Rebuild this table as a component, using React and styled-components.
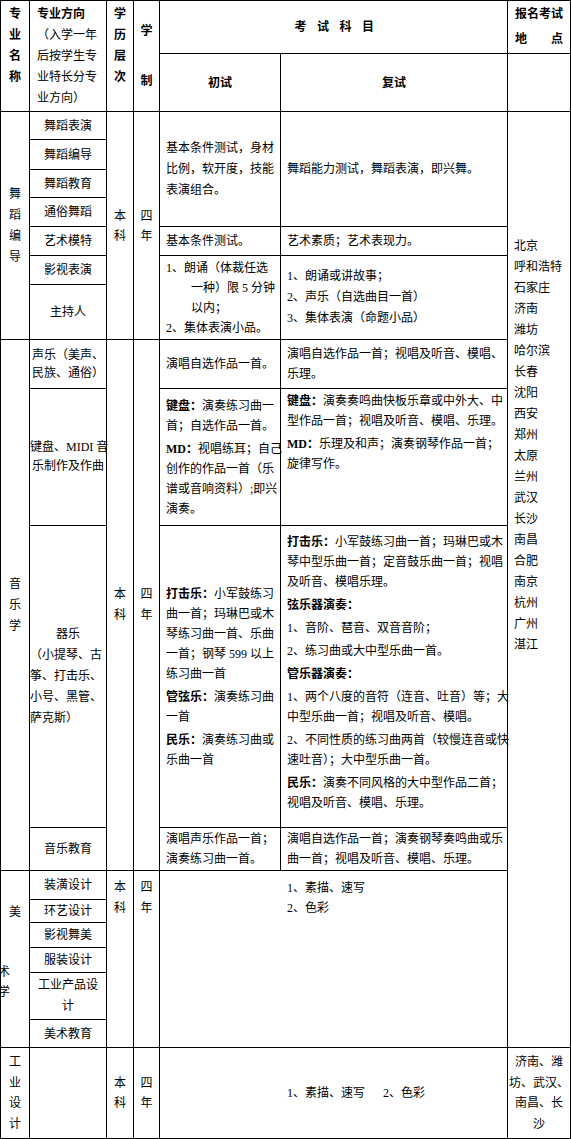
import React from 'react';
import styled, { createGlobalStyle } from 'styled-components';

const GlobalStyle = createGlobalStyle`
  html, body { margin: 0; padding: 0; background: #fff; }
  body {
    font-family: "Liberation Serif", "Noto Sans CJK SC", serif;
    font-size: 12px;
    color: #000;
  }
`;

const Sheet = styled.table`
  width: 570px;
  border-collapse: collapse;
  table-layout: fixed;
  font-size: 12px;
`;

const Col = styled.col`
  width: ${(p) => p.$w}px;
`;

const Row = styled.tr`
  height: ${(p) => p.$h}px;
`;

const Cell = styled.td`
  border: 1px solid #000;
  padding: ${(p) => p.$pt || 0}px 0 0 ${(p) => p.$pl || 0}px;
  text-align: ${(p) => p.$align || 'center'};
  vertical-align: ${(p) => p.$va || 'middle'};
  line-height: ${(p) => p.$lh || 20}px;
  font-weight: ${(p) => (p.$bold ? 700 : 400)};
  letter-spacing: ${(p) => p.$ls || 0}px;
  white-space: nowrap;
  overflow: visible;
`;

const Line = styled.div`
  white-space: pre;
  text-align: ${(p) => p.$align || 'inherit'};
  padding-left: ${(p) => p.$indent || 0}px;
  margin-left: ${(p) => p.$shift || 0}px;
`;

const Para = styled.div`
  & + & {
    margin-top: ${(p) => (p.$gap === undefined ? 4 : p.$gap)}px;
  }
`;

const Label = styled.b`
  font-weight: 700;
`;

const Gap = styled.span`
  display: inline-block;
  width: ${(p) => p.$w}px;
`;

const Chars = ({ text }) => text.split('').map((c, i) => <Line key={i}>{c}</Line>);
const Lines = ({ items, align }) =>
  items.map((t, i) => (
    <Line key={i} $align={align}>
      {t}
    </Line>
  ));

const cities = [
  '北京', '呼和浩特', '石家庄', '济南', '潍坊', '哈尔滨', '长春', '沈阳', '西安', '郑州',
  '太原', '兰州', '武汉', '长沙', '南昌', '合肥', '南京', '杭州', '广州', '湛江',
];

export default function App() {
  return (
    <>
      <GlobalStyle />
      <Sheet>
        <colgroup>
          <Col $w={29} />
          <Col $w={77} />
          <Col $w={27} />
          <Col $w={26} />
          <Col $w={121} />
          <Col $w={227} />
          <Col $w={63} />
        </colgroup>
        <tbody>
          <Row $h={53}>
            <Cell as="th" rowSpan={2} $bold $va="top" $pt={3} $lh={21}>
              <Chars text="专业名称" />
            </Cell>
            <Cell as="th" rowSpan={2} $align="left" $pl={7} $lh={21}>
              <Line><Label>专业方向</Label></Line>
              <Lines items={['（入学一年', '后按学生专', '业特长分专', '业方向）']} />
            </Cell>
            <Cell as="th" rowSpan={2} $bold $va="top" $pt={3} $lh={21}>
              <Chars text="学历层次" />
            </Cell>
            <Cell as="th" rowSpan={2} $bold $lh={25}>
              <Line>学</Line>
              <Line> </Line>
              <Line>制</Line>
            </Cell>
            <Cell as="th" colSpan={2} $bold $ls={10.5} $pl={12}>
              考试科目
            </Cell>
            <Cell as="th" $bold $lh={25}>
              <Line>报名考试</Line>
              <Line>地　　点</Line>
            </Cell>
          </Row>
          <Row $h={58}>
            <Cell as="th" $bold>初试</Cell>
            <Cell as="th" $bold>复试</Cell>
            <Cell />
          </Row>

          <Row $h={28}>
            <Cell rowSpan={7} $lh={21}>
              <Chars text="舞蹈编导" />
            </Cell>
            <Cell>舞蹈表演</Cell>
            <Cell rowSpan={7} $lh={20}>
              <Chars text="本科" />
            </Cell>
            <Cell rowSpan={7} $lh={20}>
              <Chars text="四年" />
            </Cell>
            <Cell rowSpan={4} $align="left" $pl={6} $lh={21}>
              <Lines items={['基本条件测试，身材', '比例，软开度，技能', '表演组合。']} />
            </Cell>
            <Cell rowSpan={4} $align="left" $pl={6}>
              舞蹈能力测试，舞蹈表演，即兴舞。
            </Cell>
            <Cell rowSpan={17} $align="left" $va="top" $pl={6} $pt={124} $lh={21}>
              <Lines items={cities} />
            </Cell>
          </Row>
          <Row $h={30}>
            <Cell>舞蹈编导</Cell>
          </Row>
          <Row $h={28}>
            <Cell>舞蹈教育</Cell>
          </Row>
          <Row $h={29}>
            <Cell>通俗舞蹈</Cell>
          </Row>
          <Row $h={29}>
            <Cell>艺术模特</Cell>
            <Cell $align="left" $pl={6}>基本条件测试。</Cell>
            <Cell $align="left" $pl={6}>艺术素质；艺术表现力。</Cell>
          </Row>
          <Row $h={29}>
            <Cell>影视表演</Cell>
            <Cell rowSpan={2} $align="left" $pl={6} $lh={20}>
              <Line>1、朗诵（体裁任选</Line>
              <Line $indent={25}>一种）限 5 分钟</Line>
              <Line $indent={25}>以内；</Line>
              <Line>2、集体表演小品。</Line>
            </Cell>
            <Cell rowSpan={2} $align="left" $pl={6} $lh={21}>
              <Lines items={['1、朗诵或讲故事；', '2、声乐（自选曲目一首）', '3、集体表演（命题小品）']} />
            </Cell>
          </Row>
          <Row $h={55}>
            <Cell>主持人</Cell>
          </Row>

          <Row $h={49}>
            <Cell rowSpan={4} $lh={21}>
              <Chars text="音乐学" />
            </Cell>
            <Cell $lh={18}>
              <Lines items={['声乐（美声、', '民族、通俗）']} />
            </Cell>
            <Cell rowSpan={4} $lh={21}>
              <Chars text="本科" />
            </Cell>
            <Cell rowSpan={4} $lh={21}>
              <Chars text="四年" />
            </Cell>
            <Cell $align="left" $pl={6}>演唱自选作品一首。</Cell>
            <Cell $align="left" $pl={6} $lh={20}>
              <Lines items={['演唱自选作品一首；视唱及听音、模唱、', '乐理。']} />
            </Cell>
          </Row>
          <Row $h={137}>
            <Cell $lh={19}>
              <Lines items={['键盘、MIDI 音', '乐制作及作曲']} />
            </Cell>
            <Cell $align="left" $pl={6} $lh={20}>
              <Para>
                <Line><Label>键盘：</Label>演奏练习曲一</Line>
                <Line>首；自选作品一首。</Line>
              </Para>
              <Para $gap={4}>
                <Line><Label>MD：</Label>视唱练耳；自己</Line>
                <Line>创作的作品一首（乐</Line>
                <Line>谱或音响资料）;即兴</Line>
                <Line>演奏。</Line>
              </Para>
            </Cell>
            <Cell $align="left" $va="top" $pl={6} $pt={2} $lh={20}>
              <Para>
                <Line><Label>键盘：</Label>演奏奏鸣曲快板乐章或中外大、中</Line>
                <Line>型作品一首；视唱及听音、模唱、乐理。</Line>
              </Para>
              <Para $gap={4}>
                <Line><Label>MD：</Label>乐理及和声；演奏钢琴作品一首；</Line>
                <Line>旋律写作。</Line>
              </Para>
            </Cell>
          </Row>
          <Row $h={302}>
            <Cell $lh={21} $align="left">
              <Line $align="center">器乐</Line>
              <Lines items={['（小提琴、古', '筝、打击乐、', '小号、黑管、', '萨克斯）']} />
            </Cell>
            <Cell $align="left" $pl={6} $lh={20}>
              <Para>
                <Line><Label>打击乐：</Label>小军鼓练习</Line>
                <Line>曲一首；玛琳巴或木</Line>
                <Line>琴练习曲一首、乐曲</Line>
                <Line>一首；钢琴 599 以上</Line>
                <Line>练习曲一首</Line>
              </Para>
              <Para $gap={4}>
                <Line><Label>管弦乐：</Label>演奏练习曲</Line>
                <Line>一首</Line>
              </Para>
              <Para $gap={4}>
                <Line><Label>民乐：</Label>演奏练习曲或</Line>
                <Line>乐曲一首</Line>
              </Para>
            </Cell>
            <Cell $align="left" $va="top" $pl={6} $pt={6} $lh={20}>
              <Para>
                <Line><Label>打击乐：</Label>小军鼓练习曲一首；玛琳巴或木</Line>
                <Line>琴中型乐曲一首；定音鼓乐曲一首；视唱</Line>
                <Line>及听音、模唱乐理。</Line>
              </Para>
              <Para $gap={3}>
                <Line><Label>弦乐器演奏：</Label></Line>
              </Para>
              <Para $gap={3}>
                <Line>1、音阶、琶音、双音音阶；</Line>
              </Para>
              <Para $gap={3}>
                <Line>2、练习曲或大中型乐曲一首。</Line>
              </Para>
              <Para $gap={3}>
                <Line><Label>管乐器演奏：</Label></Line>
              </Para>
              <Para $gap={3}>
                <Line>1、两个八度的音符（连音、吐音）等；大</Line>
                <Line>中型乐曲一首；视唱及听音、模唱。</Line>
              </Para>
              <Para $gap={3}>
                <Line>2、不同性质的练习曲两首（较慢连音或快</Line>
                <Line>速吐音）；大中型乐曲一首。</Line>
              </Para>
              <Para $gap={3}>
                <Line><Label>民乐：</Label>演奏不同风格的大中型作品二首；</Line>
                <Line>视唱及听音、模唱、乐理。</Line>
              </Para>
            </Cell>
          </Row>
          <Row $h={43}>
            <Cell>音乐教育</Cell>
            <Cell $align="left" $pl={6} $lh={20}>
              <Lines items={['演唱声乐作品一首；', '演奏练习曲一首。']} />
            </Cell>
            <Cell $align="left" $pl={6} $lh={20}>
              <Lines items={['演唱自选作品一首；演奏钢琴奏鸣曲或乐', '曲一首；视唱及听音、模唱、乐理。']} />
            </Cell>
          </Row>

          <Row $h={29}>
            <Cell rowSpan={6} $va="top" $pt={31} $lh={20}>
              <Line>美</Line>
              <Line> </Line>
              <Line> </Line>
              <Line $align="left" $shift={-3}>术</Line>
              <Line $align="left" $shift={-3}>学</Line>
            </Cell>
            <Cell>装潢设计</Cell>
            <Cell rowSpan={6} $va="top" $pt={6} $lh={21}>
              <Chars text="本科" />
            </Cell>
            <Cell rowSpan={6} $va="top" $pt={6} $lh={21}>
              <Chars text="四年" />
            </Cell>
            <Cell colSpan={2} rowSpan={6} $align="left" $va="top" $pl={127} $pt={7} $lh={20}>
              <Lines items={['1、素描、速写', '2、色彩']} />
            </Cell>
          </Row>
          <Row $h={23}>
            <Cell>环艺设计</Cell>
          </Row>
          <Row $h={25}>
            <Cell>影视舞美</Cell>
          </Row>
          <Row $h={25}>
            <Cell>服装设计</Cell>
          </Row>
          <Row $h={47}>
            <Cell $lh={21}>
              <Lines items={['工业产品设', '计']} />
            </Cell>
          </Row>
          <Row $h={28}>
            <Cell>美术教育</Cell>
          </Row>

          <Row $h={91}>
            <Cell $lh={20.5}>
              <Chars text="工业设计" />
            </Cell>
            <Cell />
            <Cell $lh={20}>
              <Chars text="本科" />
            </Cell>
            <Cell $lh={20}>
              <Chars text="四年" />
            </Cell>
            <Cell colSpan={2} $align="left" $pl={127}>
              1、素描、速写<Gap $w={18} />2、色彩
            </Cell>
            <Cell $lh={20.5}>
              <Lines items={['济南、潍', '坊、武汉、', '南昌、长', '沙']} />
            </Cell>
          </Row>
        </tbody>
      </Sheet>
    </>
  );
}
